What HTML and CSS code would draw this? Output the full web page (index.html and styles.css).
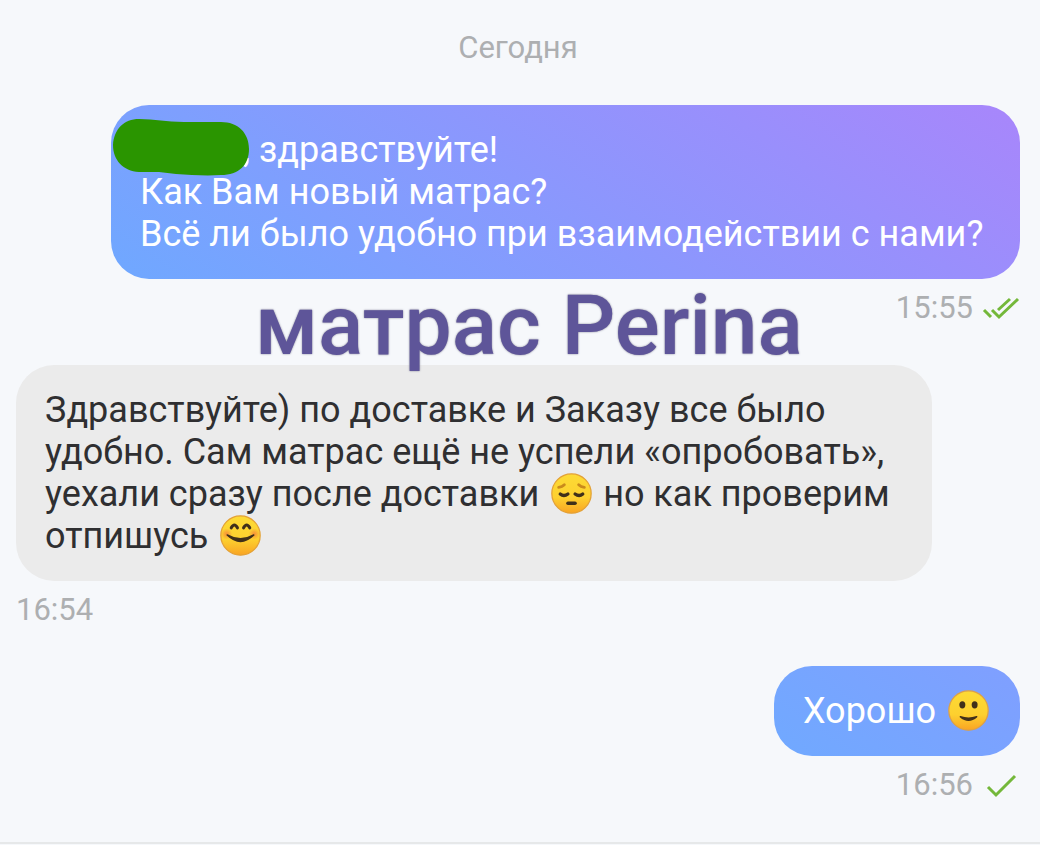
FILE: index.html
```html
<!DOCTYPE html>
<html lang="ru">
<head>
<meta charset="utf-8">
<meta name="viewport" content="width=device-width, initial-scale=1">
<title>Чат</title>
<link rel="stylesheet" href="styles.css">
</head>
<body>
<svg class="defs" width="0" height="0" aria-hidden="true">
  <defs>
    <linearGradient id="face" x1="0" y1="0" x2="0" y2="1">
      <stop offset="0" stop-color="#fddb35"/>
      <stop offset="0.6" stop-color="#fdd02f"/>
      <stop offset="1" stop-color="#f9a423"/>
    </linearGradient>
    <radialGradient id="blush">
      <stop offset="0" stop-color="#f5803a" stop-opacity="0.8"/>
      <stop offset="1" stop-color="#f5803a" stop-opacity="0"/>
    </radialGradient>
  </defs>
</svg>
<main class="chat">
  <div class="day">Сегодня</div>

  <section class="message out first">
    <div class="bubble question">
      <p><span class="name"><svg class="scribble" viewBox="0 0 137 58" aria-hidden="true"><path d="M1 27C2 11 12 1 27 1C43 1 54 4 72 4L109 4C126 4 137 15 137 31C137 47 127 57 109 57C94 58 79 57 64 56L47 54L27 54C11 53 1 42 1 27Z" fill="#2a9500"/></svg></span>, здравствуйте!<br>Как Вам новый матрас?<br>Всё ли было удобно при взаимодействии с нами?</p>
    </div>
    <div class="meta"><time>15:55</time>
      <svg class="tick" viewBox="0 0 36 24" aria-hidden="true"><path d="M0 14L7 21M8 14L15 21L34 3M14 14L26 3"/></svg>
    </div>
    <h1 class="title">матрас Perina</h1>
  </section>

  <section class="message in">
    <div class="bubble answer">
      <p>Здравствуйте) по доставке и Заказу все было удобно. Сам матрас ещё не успели «опробовать», уехали сразу после доставки <svg class="emoji" viewBox="0 0 40 40" role="img" aria-label="Грусть"><circle cx="20" cy="20" r="19.2" fill="url(#face)" stroke="#e3a137" stroke-width="1.2"/><path d="M7.500 14Q11 13.500 13 11.500M32.500 14Q29 13.500 27 11.500" fill="none" stroke="#c98a1c" stroke-width="2.800" stroke-linecap="round"/><path d="M9 20.500Q12.500 23.500 16.500 20.500M23.500 20.500Q27.500 23.500 31 20.500" fill="none" stroke="#40301a" stroke-width="3.200" stroke-linecap="round"/><path d="M16.500 29.500H23.500" stroke="#40301a" stroke-width="3.400" stroke-linecap="round"/></svg> но как проверим отпишусь <svg class="emoji" viewBox="0 0 40 40" role="img" aria-label="Радость"><circle cx="20" cy="20" r="19.2" fill="url(#face)" stroke="#e3a137" stroke-width="1.2"/><circle cx="6.500" cy="18.500" r="5.500" fill="url(#blush)"/><circle cx="33.500" cy="18.500" r="5.500" fill="url(#blush)"/><path d="M11 12.500Q14 7 17 12.500M23 12.500Q26 7 29 12.500" fill="none" stroke="#40301a" stroke-width="3" stroke-linecap="round"/><path d="M7 19.500Q20 27 33 19.500Q20 32 7 19.500Z" fill="#40301a" stroke="#40301a" stroke-width="1.400" stroke-linejoin="round"/></svg></p>
    </div>
    <div class="meta"><time>16:54</time></div>
  </section>

  <section class="message out">
    <div class="bubble reply">
      <p>Хорошо <svg class="emoji" viewBox="0 0 40 40" role="img" aria-label="Улыбка"><circle cx="20" cy="20" r="19.2" fill="url(#face)" stroke="#dda047" stroke-width="1.2"/><ellipse cx="14" cy="14.500" rx="2.900" ry="3.600" fill="#40301a"/><ellipse cx="26" cy="14.500" rx="2.900" ry="3.600" fill="#40301a"/><path d="M12 26Q20 33 28 26Q20 29 12 26Z" fill="#40301a" stroke="#40301a" stroke-width="1.400" stroke-linejoin="round"/></svg></p>
    </div>
    <div class="meta"><time>16:56</time>
      <svg class="tick" viewBox="0 0 36 24" aria-hidden="true"><path d="M4 14L12 22L31 3"/></svg>
    </div>
  </section>
</main>
</body>
</html>
```
FILE: styles.css
```css
* { box-sizing: border-box; }
body {
  margin: 0;
  background: #f6f8fb;
  color: #2f2f31;
  font-family: Roboto, "Noto Sans", sans-serif;
  font-size: 36px;
  line-height: 42px;
}
p, h1 { margin: 0; }
.defs { position: absolute; }
.chat {
  display: flex;
  flex-direction: column;
  padding: 28px 20px 38px 16px;
  border-bottom: 2px solid #e6e8e9;
}
.day {
  text-align: center;
  font-size: 31px;
  line-height: 40px;
  color: #adafb1;
}
.message {
  display: flex;
  flex-direction: column;
  position: relative;
}
.out { align-items: flex-end; margin-top: 37px; }
.in { align-items: flex-start; margin-top: 38px; }
.first { z-index: 1; }
.bubble { padding: 24px 29px; border-radius: 38px; }
.question {
  width: 100%;
  max-width: 909px;
  color: #fff;
  background: linear-gradient(35deg, #6fa8ff, #a886fb);
}
.answer { max-width: 916px; background: #ebebeb; }
.reply {
  color: #fff;
  background: linear-gradient(35deg, #70a9ff, #809fff);
}
.name { display: inline-block; position: relative; width: 103px; }
.scribble { position: absolute; left: -28px; top: -44px; width: 137px; height: 58px; }
.meta {
  display: flex;
  align-items: center;
  gap: 11px;
  margin-top: 10px;
  font-size: 31px;
  line-height: 38px;
  color: #adafb1;
}
.tick {
  width: 36px;
  height: 24px;
  overflow: visible;
  fill: none;
  stroke: #74b83a;
  stroke-width: 3;
}
.title {
  position: absolute;
  top: 179px;
  left: 239px;
  font-size: 84px;
  line-height: 84px;
  font-weight: 500;
  color: #5e5599;
  text-shadow: 0 0 2px #77758c;
  white-space: nowrap;
}
.emoji { width: 41px; height: 41px; margin: 0 2px 0 3px; vertical-align: -8px; }
```
